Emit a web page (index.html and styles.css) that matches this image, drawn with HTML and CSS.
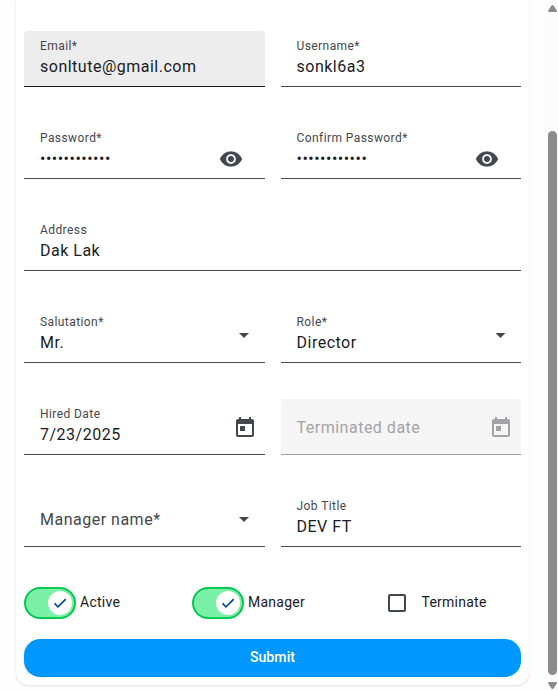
FILE: index.html
```html
<!DOCTYPE html>
<html lang="en">
<head>
<meta charset="utf-8">
<title>User form</title>
<link rel="stylesheet" href="styles.css">
</head>
<body>
<svg class="defs" width="0" height="0">
  <symbol id="eye" viewBox="0 0 24 24"><path d="M12 4.500C7 4.500 2.730 7.610 1 12c1.730 4.390 6 7.500 11 7.500s9.270-3.110 11-7.500c-1.730-4.390-6-7.500-11-7.500zM12 17c-2.760 0-5-2.240-5-5s2.240-5 5-5 5 2.240 5 5-2.240 5-5 5zm0-8c-1.660 0-3 1.340-3 3s1.340 3 3 3 3-1.340 3-3-1.340-3-3-3z"/></symbol>
  <symbol id="calendar" viewBox="0 0 24 24"><path d="M19 3h-1V1h-2v2H8V1H6v2H5c-1.110 0-1.990.9-1.990 2L3 19c0 1.100.89 2 2 2h14c1.100 0 2-.9 2-2V5c0-1.100-.9-2-2-2zm0 16H5V8h14v11zM7 10h5v5H7z"/></symbol>
  <symbol id="check" viewBox="0 0 24 24"><path d="M19.690 5.230L8.960 15.960l-4.230-4.230L2.960 13.500l6 6L21.460 7z"/></symbol>
</svg>
<main class="page">
  <form class="card">
    <div class="fields">
      <div class="field hovered"><div class="text"><label>Email*</label><span class="value">sonltute@gmail.com</span></div></div>
      <div class="field"><div class="text"><label>Username*</label><span class="value">sonkl6a3</span></div></div>
      <div class="field"><div class="text"><label>Password*</label><span class="value">••••••••••••</span></div><svg class="icon eye"><use href="#eye"/></svg></div>
      <div class="field"><div class="text"><label>Confirm Password*</label><span class="value">••••••••••••</span></div><svg class="icon eye"><use href="#eye"/></svg></div>
      <div class="field wide"><div class="text"><label>Address</label><span class="value">Dak Lak</span></div></div>
      <div class="field"><div class="text"><label>Salutation*</label><span class="value">Mr.</span></div><i class="arrow"></i></div>
      <div class="field"><div class="text"><label>Role*</label><span class="value">Director</span></div><i class="arrow"></i></div>
      <div class="field"><div class="text"><label>Hired Date</label><span class="value">7/23/2025</span></div><svg class="icon"><use href="#calendar"/></svg></div>
      <div class="field disabled"><span class="placeholder">Terminated date</span><svg class="icon"><use href="#calendar"/></svg></div>
      <div class="field"><span class="placeholder">Manager name*</span><i class="arrow"></i></div>
      <div class="field"><div class="text"><label>Job Title</label><span class="value">DEV FT</span></div></div>
    </div>
    <div class="options">
      <div class="option"><span class="switch"><span class="thumb"><svg><use href="#check"/></svg></span></span><span>Active</span></div>
      <div class="option"><span class="switch"><span class="thumb"><svg><use href="#check"/></svg></span></span><span>Manager</span></div>
      <div class="option terminate"><span class="box"></span><span>Terminate</span></div>
    </div>
    <button class="submit" type="button">Submit</button>
  </form>
  <aside class="scrollbar">
    <svg class="scroll-arrow" viewBox="0 0 9 7"><path d="M4.500 0Q5.200 0 5.700.8L8.700 5.300Q9.300 7 8 7H1Q-.3 7 .3 5.300L3.300.8Q3.800 0 4.500 0z"/></svg>
    <span class="scroll-thumb"></span>
    <svg class="scroll-arrow" viewBox="0 0 9 7"><path d="M4.500 7Q5.200 7 5.700 6.200L8.700 1.700Q9.300 0 8 0H1Q-.3 0 .3 1.700L3.300 6.200Q3.800 7 4.500 7z"/></svg>
  </aside>
</main>
</body>
</html>
```
FILE: styles.css
```css
* { box-sizing: border-box; }

body {
  margin: 0;
  background: #fefefe;
  color: #1a1b1f;
  font-family: Roboto, sans-serif;
  overflow: hidden;
}

.defs { display: block; }

.page {
  display: flex;
  justify-content: space-between;
  height: 690px;
  padding-left: 16px;
}

.card {
  width: 513px;
  height: 685px;
  padding: 31px 8px 8px;
  background: #fff;
  border-radius: 0 0 12px 12px;
  box-shadow: 0 1px 2px rgba(0, 0, 0, .12), 0 0 1px rgba(0, 0, 0, .12);
}

.fields {
  display: grid;
  grid-template-columns: 1fr 1fr;
  gap: 36px 16px;
}

.field {
  display: flex;
  align-items: center;
  justify-content: space-between;
  height: 56px;
  padding: 2px 8px 0 16px;
  border-bottom: 1px solid #44474e;
  border-radius: 4px 4px 0 0;
}

.wide { grid-column: 1 / -1; }

.hovered {
  background: #ededed;
  border-color: #1a1b1f;
}

.text {
  display: flex;
  flex-direction: column;
  gap: 1px;
  align-self: flex-start;
  padding-top: 5px;
}

label {
  color: #44474e;
  font-size: 12px;
  line-height: 16px;
  letter-spacing: .42px;
}

.value,
.placeholder {
  font-size: 16px;
  line-height: 24px;
  letter-spacing: .5px;
}

.placeholder {
  padding-top: 1px;
  color: #44474e;
}

.icon {
  width: 24px;
  height: 24px;
  fill: #44474e;
}

.eye {
  margin: 14px 14px 0 0;
  stroke: #44474e;
  stroke-width: .3px;
}

.arrow {
  width: 10px;
  height: 5px;
  margin-right: 7.500px;
  background: #44474e;
  clip-path: polygon(0 0, 100% 0, 50% 100%);
}

.disabled {
  background: #f5f5f5;
  border-color: #a3a3a5;
}

.disabled .placeholder { color: #a3a3a5; }
.disabled .icon { fill: #a3a3a5; }

.options {
  display: grid;
  grid-template-columns: 168px 196px 1fr;
  margin-top: 40px;
  height: 32px;
}

.option {
  display: flex;
  align-items: center;
  gap: 4px;
  font-size: 14px;
  line-height: 20px;
  letter-spacing: .25px;
}

.option > span:last-child { padding-bottom: 2px; }

.switch {
  display: flex;
  align-items: center;
  justify-content: flex-end;
  width: 52px;
  height: 32px;
  padding-right: 2px;
  background: #7bf1a8;
  border: 2px solid #00c950;
  border-radius: 16px;
}

.thumb {
  display: flex;
  align-items: center;
  justify-content: center;
  width: 24px;
  height: 24px;
  background: #fff;
  border-radius: 50%;
}

.thumb svg {
  width: 16px;
  height: 16px;
  fill: #00458f;
}

.terminate { gap: 15.500px; }

.box {
  width: 18px;
  height: 18px;
  border: 2px solid #44474e;
  border-radius: 2px;
}

.submit {
  display: block;
  width: 100%;
  height: 38px;
  margin-top: 20px;
  padding: 0 0 2px;
  border: 0;
  border-radius: 16px;
  background: #0098ff;
  color: #fff;
  font: 500 14px/20px Roboto, sans-serif;
  letter-spacing: .1px;
}

.scrollbar {
  display: flex;
  flex-direction: column;
  align-items: center;
  justify-content: space-between;
  width: 13px;
  padding: 5px 1px 1px 3px;
  background: #fcfcfc;
}

.scroll-arrow {
  width: 9px;
  height: 7px;
  fill: #8b8b8b;
}

.scroll-thumb {
  width: 9px;
  height: 544px;
  margin: auto 0 7px;
  border-radius: 5px;
  background: #8b8b8b;
}
```
